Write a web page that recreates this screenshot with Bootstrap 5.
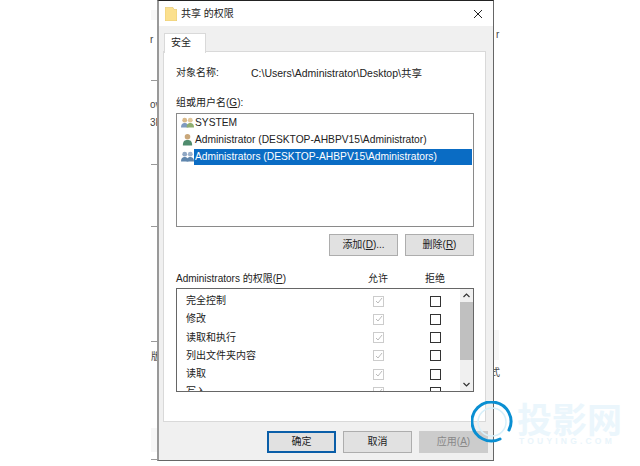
<!DOCTYPE html>
<html lang="zh">
<head>
<meta charset="utf-8">
<title>共享 的权限</title>
<link href="https://cdn.jsdelivr.net/npm/bootstrap@5.3.0/dist/css/bootstrap.min.css" rel="stylesheet">
<style>
html,body{margin:0;height:466px;overflow:hidden;background:#fff}
body{position:relative;font:10px/1.2 "Liberation Sans","Noto Sans CJK SC",sans-serif;color:#222}
.frag{position:absolute;font-size:10px;line-height:12px;color:#444;white-space:nowrap}
.tick{position:absolute;height:1px;width:6px;background:#999}
.pale{position:absolute;background:#f7f7f7}
.dlg{position:absolute;left:157px;top:0;width:337px;height:461px;background:#f0f0f0;border:1px solid #666;border-left:2px solid #999;border-top-color:#222;display:flex;flex-direction:column}
.ttl{height:25px;background:#fff;padding-left:6px;font-size:10px;flex:none}
.xbtn{width:30px;height:25px}
.tabs{height:26px;padding:7px 0 0 5px;flex:none}
.tabh{width:42px;height:20px;background:#fff;border:1px solid #d9d9d9;border-bottom:0;padding:3px 0 0 6px;font-size:10px;position:relative;z-index:1}
.pane{margin:-1px 7px 0 4px;height:371px;background:#fff;border:1px solid #d9d9d9;padding:0 11px 0 12px;flex:none}
.objrow{padding-top:15px;height:45px}
.objl{width:75px}
.objp{font-size:10.5px}
.glabel{height:16px}
.ubox{height:114px;border:1px solid #8a8a8a}
.urow{height:17px;padding-left:4px}
.urow svg{flex:none}
.uname{flex:1;height:16px;line-height:16px;padding-left:1px;margin-right:1px;font-size:10.25px}
.sel{background:#0a6cc4;color:#fff}
.wbtn{width:69px;height:22px;background:#e1e1e1;border:1px solid #adadad;font-size:10px;line-height:20px;text-align:center;color:#222}
.brow{margin-top:7px;gap:7px;height:22px}
.phead{margin-top:15px;height:17px;padding-top:2px}
.pname{width:177px}
.pc1{width:50px;text-align:center}
.pc2{width:64px;text-align:center}
.pbox{height:104px;border:1px solid #666;overflow:hidden;display:flex}
.plist{flex:1;padding-top:3px;overflow:hidden}
.prow{height:18.25px;display:flex;align-items:center}
.prow>span{width:196px;padding-left:9px;flex:none}
.cka{width:11px;height:11px;border:1px solid #ccc;margin-right:46px;flex:none;display:flex;align-items:center;justify-content:center}
.ckb{width:11px;height:11px;border:1px solid #333;flex:none}
.sbar{width:13px;background:#f0f0f0;display:flex;flex-direction:column;align-items:center;flex:none}
.sarr{height:13px;flex:none;display:flex;align-items:center}
.sthumb{height:58px;width:100%;background:#c0c0c0;flex:none}
.foot{padding:9px 0 0 108px;gap:7px}
.okb{border:2px solid #0a5ea8;height:22px;line-height:18px}
.dis{background:#ccc;border-color:#ccc;color:#888}
.wm{position:absolute;left:471px;top:401px;width:160px;height:50px}
.wmt{position:absolute;left:46px;top:2px;font:700 35px/30px "Noto Sans CJK SC",sans-serif;color:#ebf6fc;white-space:nowrap}
.wms{position:absolute;left:48px;top:35px;font:700 8.5px/10px "Liberation Sans",sans-serif;color:#eaf5fb;letter-spacing:3.2px;white-space:nowrap}
</style>
</head>
<body>
<i class="pale" style="left:151px;top:10px;width:6px;height:10px"></i>
<i class="pale" style="left:151px;top:428px;width:6px;height:24px"></i>
<i class="pale" style="left:494px;top:330px;width:5px;height:30px"></i>
<span class="frag" style="left:150px;top:34px">r</span>
<span class="frag" style="left:150px;top:99px">ov</span>
<span class="frag" style="left:150px;top:117px">3F</span>
<span class="frag" style="left:151px;top:351px">版</span>
<span class="frag" style="left:490px;top:367px">式</span>
<span class="frag" style="left:496px;top:29px">r</span>
<i class="tick" style="left:151px;top:80px"></i>
<i class="tick" style="left:151px;top:164px"></i>
<i class="tick" style="left:151px;top:226px"></i>
<i class="tick" style="left:151px;top:341px"></i>
<i class="tick" style="left:151px;top:459px"></i>

<div class="dlg">
  <div class="ttl d-flex align-items-center">
    <svg width="12" height="14" viewBox="0 0 12 14" class="me-1 flex-shrink-0"><path d="M0 .5h8l1 2h3V14H0z" fill="#fbe08e" stroke="#e2c36a" stroke-width=".6"/></svg>
    <span>共享 的权限</span>
    <div class="xbtn ms-auto d-flex align-items-center justify-content-center">
      <svg width="10" height="10" viewBox="0 0 10 10"><path d="M1 1l8 8M9 1l-8 8" stroke="#222" stroke-width="1"/></svg>
    </div>
  </div>
  <div class="tabs"><div class="tabh">安全</div></div>
  <div class="pane">
    <div class="objrow d-flex"><div class="objl">对象名称:</div><div class="objp">C:\Users\Administrator\Desktop\共享</div></div>
    <div class="glabel">组或用户名(<u>G</u>):</div>
    <div class="ubox">
      <div class="urow d-flex align-items-center">
        <svg width="13" height="13" viewBox="0 0 14 13"><circle cx="4" cy="4" r="2.6" fill="#d9b98a"/><path d="M0 12c0-4 2-5 4-5s4 1 4 5z" fill="#7f9ac0"/><circle cx="10" cy="4" r="2.6" fill="#e2c79a"/><path d="M6 12c0-4 2-5 4-5s4 1 4 5z" fill="#8fae70"/></svg>
        <div class="uname">SYSTEM</div>
      </div>
      <div class="urow d-flex align-items-center">
        <svg width="13" height="13" viewBox="0 0 14 13"><circle cx="7" cy="3.5" r="3" fill="#c9a77a"/><path d="M2 13c0-5 2-6 5-6s5 1 5 6z" fill="#4f8c6e"/></svg>
        <div class="uname">Administrator (DESKTOP-AHBPV15\Administrator)</div>
      </div>
      <div class="urow d-flex align-items-center">
        <svg width="13" height="13" viewBox="0 0 14 13"><circle cx="4" cy="4" r="2.6" fill="#8fa7c4"/><path d="M0 12c0-4 2-5 4-5s4 1 4 5z" fill="#5f86ad"/><circle cx="10" cy="4" r="2.6" fill="#9db2cc"/><path d="M6 12c0-4 2-5 4-5s4 1 4 5z" fill="#5f86ad"/></svg>
        <div class="uname sel">Administrators (DESKTOP-AHBPV15\Administrators)</div>
      </div>
    </div>
    <div class="brow d-flex justify-content-end">
      <div class="wbtn">添加(<u>D</u>)...</div>
      <div class="wbtn">删除(<u>R</u>)</div>
    </div>
    <div class="phead d-flex">
      <div class="pname">Administrators 的权限(<u>P</u>)</div>
      <div class="pc1">允许</div>
      <div class="pc2">拒绝</div>
    </div>
    <div class="pbox">
      <div class="plist">
        <div class="prow"><span>完全控制</span><i class="cka"><svg width="8" height="8" viewBox="0 0 8 8"><path d="M1 4l2 2 4-5" fill="none" stroke="#bbb"/></svg></i><i class="ckb"></i></div>
        <div class="prow"><span>修改</span><i class="cka"><svg width="8" height="8" viewBox="0 0 8 8"><path d="M1 4l2 2 4-5" fill="none" stroke="#bbb"/></svg></i><i class="ckb"></i></div>
        <div class="prow"><span>读取和执行</span><i class="cka"><svg width="8" height="8" viewBox="0 0 8 8"><path d="M1 4l2 2 4-5" fill="none" stroke="#bbb"/></svg></i><i class="ckb"></i></div>
        <div class="prow"><span>列出文件夹内容</span><i class="cka"><svg width="8" height="8" viewBox="0 0 8 8"><path d="M1 4l2 2 4-5" fill="none" stroke="#bbb"/></svg></i><i class="ckb"></i></div>
        <div class="prow"><span>读取</span><i class="cka"><svg width="8" height="8" viewBox="0 0 8 8"><path d="M1 4l2 2 4-5" fill="none" stroke="#bbb"/></svg></i><i class="ckb"></i></div>
        <div class="prow"><span>写入</span><i class="cka"><svg width="8" height="8" viewBox="0 0 8 8"><path d="M1 4l2 2 4-5" fill="none" stroke="#bbb"/></svg></i><i class="ckb"></i></div>
      </div>
      <div class="sbar">
        <div class="sarr"><svg width="7" height="5" viewBox="0 0 7 5"><path d="M.5 4l3-3 3 3" fill="none" stroke="#333" stroke-width="1.2"/></svg></div>
        <div class="sthumb"></div>
        <div class="sarr mt-auto"><svg width="7" height="5" viewBox="0 0 7 5"><path d="M.5 1l3 3 3-3" fill="none" stroke="#333" stroke-width="1.2"/></svg></div>
      </div>
    </div>
  </div>
  <div class="foot d-flex">
    <div class="wbtn okb">确定</div>
    <div class="wbtn">取消</div>
    <div class="wbtn dis">应用(<u>A</u>)</div>
  </div>
</div>

<div class="wm">
  <svg width="44" height="44" viewBox="0 0 44 44" class="position-absolute top-0 start-0">
    <circle cx="21" cy="21" r="14" fill="none" stroke="#d8f0fa" stroke-width="1.5"/>
    <path d="M38 29A19.5 19.5 0 1 0 29 38" fill="none" stroke="#0a8fd2" stroke-width="3" stroke-linecap="round"/>
  </svg>
  <div class="wmt">投影网</div>
  <div class="wms">TOUYING.COM</div>
</div>
<script src="https://cdn.jsdelivr.net/npm/bootstrap@5.3.0/dist/js/bootstrap.bundle.min.js"></script>
</body>
</html>
